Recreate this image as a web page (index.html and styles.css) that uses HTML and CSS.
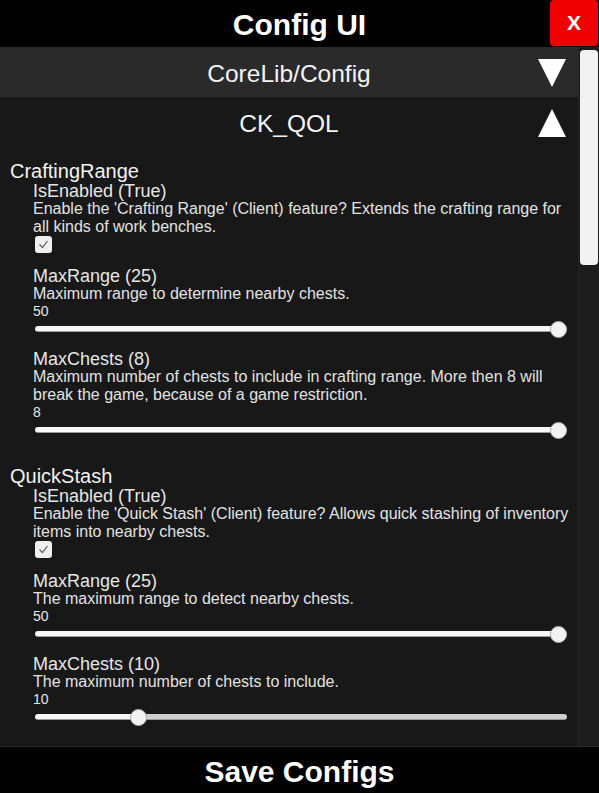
FILE: index.html
```html
<!DOCTYPE html>
<html lang="en">
<head>
    <meta charset="UTF-8">
    <meta name="viewport" content="width=device-width, initial-scale=1.0">
    <title>Config UI</title>
    <link rel="stylesheet" href="styles.css">
</head>
<body>

<div class="window">
    <header class="title-bar">
        <span></span>
        <h1>Config UI</h1>
        <button class="close-btn">X</button>
    </header>

    <div class="panel">
        <div class="content">
            <!-- Mod groups -->
            <div class="group-row collapsed">
                <span>CoreLib/Config</span>
                <svg class="arrow" viewBox="0 0 28 28"><polygon points="0,0 28,0 14,28"/></svg>
            </div>
            <div class="group-row">
                <span>CK_QOL</span>
                <svg class="arrow" viewBox="0 0 28 28"><polygon points="14,0 28,28 0,28"/></svg>
            </div>

            <div class="section">
                <div class="section-name">CraftingRange</div>

                <div class="setting">
                    <div class="setting-name">IsEnabled (True)</div>
                    <div class="setting-desc">Enable the 'Crafting Range' (Client) feature? Extends the crafting range for all kinds of work benches.</div>
                    <span class="checkbox"><svg viewBox="0 0 17 17"><polyline points="4.5,8.5 7.5,11.5 12.5,5"/></svg></span>
                </div>

                <div class="setting">
                    <div class="setting-name">MaxRange (25)</div>
                    <div class="setting-desc">Maximum range to determine nearby chests.</div>
                    <div class="value">50</div>
                    <input type="range" class="slider" min="1" max="50" value="50" style="--fill: 100%">
                </div>

                <div class="setting">
                    <div class="setting-name">MaxChests (8)</div>
                    <div class="setting-desc">Maximum number of chests to include in crafting range. More then 8 will break the game, because of a game restriction.</div>
                    <div class="value">8</div>
                    <input type="range" class="slider" min="1" max="8" value="8" style="--fill: 100%">
                </div>
            </div>

            <div class="section">
                <div class="section-name">QuickStash</div>

                <div class="setting">
                    <div class="setting-name">IsEnabled (True)</div>
                    <div class="setting-desc">Enable the 'Quick Stash' (Client) feature? Allows quick stashing of inventory items into nearby chests.</div>
                    <span class="checkbox"><svg viewBox="0 0 17 17"><polyline points="4.5,8.5 7.5,11.5 12.5,5"/></svg></span>
                </div>

                <div class="setting">
                    <div class="setting-name">MaxRange (25)</div>
                    <div class="setting-desc">The maximum range to detect nearby chests.</div>
                    <div class="value">50</div>
                    <input type="range" class="slider" min="1" max="50" value="50" style="--fill: 100%">
                </div>

                <div class="setting">
                    <div class="setting-name">MaxChests (10)</div>
                    <div class="setting-desc">The maximum number of chests to include.</div>
                    <div class="value">10</div>
                    <input type="range" class="slider" min="1" max="50" value="10" style="--fill: 18.4%">
                </div>
            </div>
        </div>

        <div class="scrollbar">
            <div class="scroll-thumb"></div>
        </div>
    </div>

    <footer class="save-bar">Save Configs</footer>
</div>

</body>
</html>
```

FILE: styles.css
```css
body {
    margin: 0;
    background-color: #000;
    font-family: "Liberation Sans", Arial, sans-serif;
    color: #ececec;
}
.window {
    width: 599px;
    height: 793px;
    display: flex;
    flex-direction: column;
    overflow: hidden;
}

/* Title bar */
.title-bar {
    height: 47px;
    display: grid;
    grid-template-columns: 49px 1fr 49px;
    align-items: start;
    background-color: #000;
}
.title-bar h1 {
    margin: 0;
    padding-top: 1px;
    line-height: 47px;
    font-size: 30px;
    font-weight: bold;
    color: #fff;
    text-align: center;
}
.close-btn {
    width: 48px;
    height: 46px;
    border: none;
    border-radius: 4px;
    background-color: #f00000;
    color: #fff;
    font-family: "Liberation Sans", Arial, sans-serif;
    font-size: 21px;
    font-weight: bold;
    padding: 0;
    cursor: pointer;
}

/* Scroll panel */
.panel {
    height: 699px;
    display: flex;
    background-color: #181818;
    border-bottom: 1px solid #2c2c2c;
    overflow: hidden;
}
.content {
    flex: 1;
    overflow: hidden;
}
.scrollbar {
    width: 18px;
    background-color: #1c1c1c;
    border-left: 1px solid #262626;
    padding: 3px 1px 0 1px;
}
.scroll-thumb {
    height: 215px;
    border-radius: 4px;
    background-color: #f2f2f2;
}

.group-row {
    height: 50px;
    display: flex;
    align-items: center;
    justify-content: center;
    position: relative;
    font-size: 24.5px;
    color: #f4f4f4;
}
.group-row span {
    padding-top: 3px;
}
.group-row.collapsed {
    background-color: #2a2a2a;
}
.arrow {
    position: absolute;
    right: 12px;
    top: 12px;
    width: 28px;
    height: 28px;
    fill: #fff;
}

/* Config sections */
.section {
    padding: 14px 4px 12px 10px;
}
.section-name {
    font-size: 20px;
    line-height: 21px;
    color: #f2f2f2;
}
.setting {
    margin-left: 23px;
    display: flex;
    flex-direction: column;
    align-items: flex-start;
}
.setting + .setting {
    margin-top: 11px;
}
.setting-name {
    font-size: 18px;
    line-height: 18px;
    color: #e6e6e6;
}
.setting-desc {
    font-size: 16px;
    line-height: 18px;
    color: #e2e2e2;
}
.value {
    font-size: 14px;
    line-height: 16px;
    color: #e6e6e6;
}
.checkbox {
    width: 17px;
    height: 17px;
    margin: 0 0 3px 2px;
    border-radius: 3px;
    background-color: #f0f0f0;
}
.checkbox svg {
    width: 17px;
    height: 17px;
    fill: none;
    stroke: #5a5a5a;
    stroke-width: 1.2;
}

/* Sliders */
.slider {
    -webkit-appearance: none;
    appearance: none;
    width: 532px;
    height: 20px;
    margin: 0 0 0 2px;
    background: transparent;
}
.slider::-webkit-slider-runnable-track {
    height: 6px;
    border-radius: 3px;
    border-bottom: 1px solid #9a9a9a;
    background: linear-gradient(to right, #f6f6f6 var(--fill), #cfcfcf var(--fill));
}
.slider::-webkit-slider-thumb {
    -webkit-appearance: none;
    width: 17px;
    height: 17px;
    margin-top: -5.5px;
    border-radius: 50%;
    border: 1px solid #a8a8a8;
    box-sizing: border-box;
    background-color: #f2f2f2;
}

/* Footer */
.save-bar {
    height: 46px;
    line-height: 50px;
    text-align: center;
    font-size: 30px;
    font-weight: bold;
    color: #fff;
    background-color: #000;
}
```
